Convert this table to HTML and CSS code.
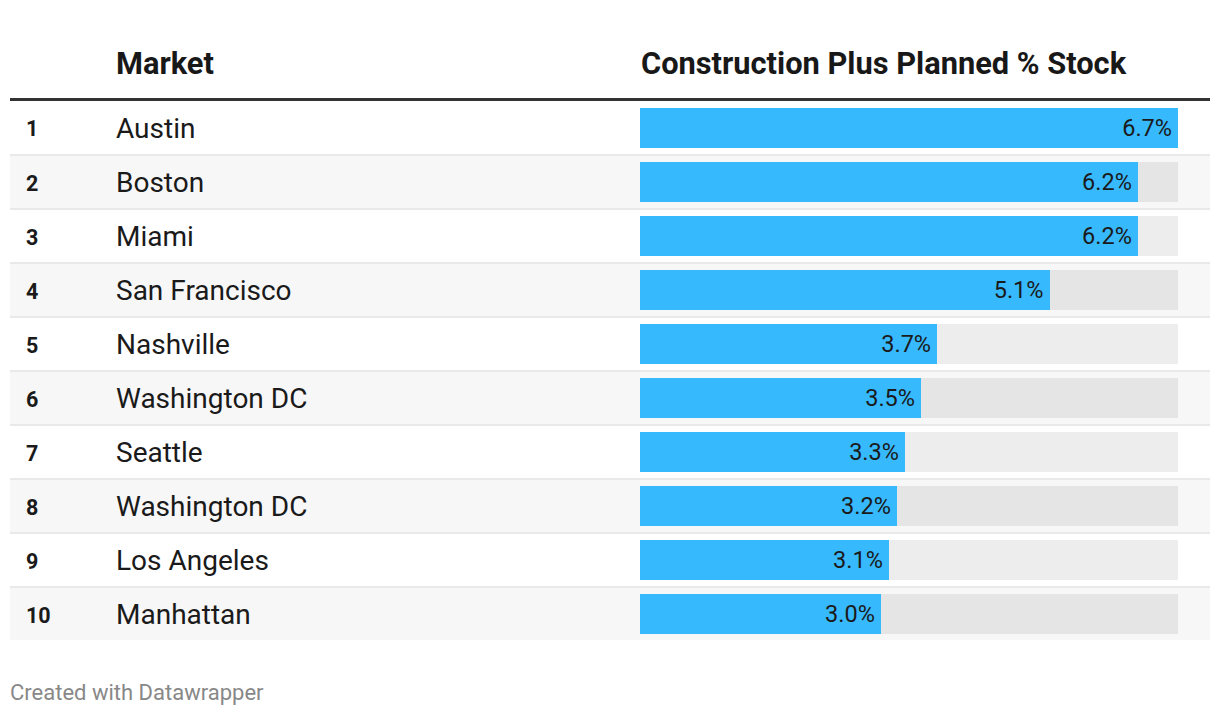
FILE: index.html
```html
<!DOCTYPE html>
<html>
<head>
<meta charset="utf-8">
<link rel="stylesheet" href="styles.css">
</head>
<body>
<div class="chart">
  <div class="table">
    <div class="head">
      <div class="c-rank"></div>
      <div class="c-market">Market</div>
      <div class="c-bar">Construction Plus Planned % Stock</div>
    </div>
    <div class="row first">
      <div class="c-rank">1</div><div class="c-market">Austin</div>
      <div class="c-bar"><div class="track"><div class="fill" style="width:100%"><span>6.7%</span></div></div></div>
    </div>
    <div class="row alt">
      <div class="c-rank">2</div><div class="c-market">Boston</div>
      <div class="c-bar"><div class="track"><div class="fill" style="width:92.54%"><span>6.2%</span></div></div></div>
    </div>
    <div class="row">
      <div class="c-rank">3</div><div class="c-market">Miami</div>
      <div class="c-bar"><div class="track"><div class="fill" style="width:92.54%"><span>6.2%</span></div></div></div>
    </div>
    <div class="row alt">
      <div class="c-rank">4</div><div class="c-market">San Francisco</div>
      <div class="c-bar"><div class="track"><div class="fill" style="width:76.12%"><span>5.1%</span></div></div></div>
    </div>
    <div class="row">
      <div class="c-rank">5</div><div class="c-market">Nashville</div>
      <div class="c-bar"><div class="track"><div class="fill" style="width:55.22%"><span>3.7%</span></div></div></div>
    </div>
    <div class="row alt">
      <div class="c-rank">6</div><div class="c-market">Washington DC</div>
      <div class="c-bar"><div class="track"><div class="fill" style="width:52.24%"><span>3.5%</span></div></div></div>
    </div>
    <div class="row">
      <div class="c-rank">7</div><div class="c-market">Seattle</div>
      <div class="c-bar"><div class="track"><div class="fill" style="width:49.25%"><span>3.3%</span></div></div></div>
    </div>
    <div class="row alt">
      <div class="c-rank">8</div><div class="c-market">Washington DC</div>
      <div class="c-bar"><div class="track"><div class="fill" style="width:47.76%"><span>3.2%</span></div></div></div>
    </div>
    <div class="row">
      <div class="c-rank">9</div><div class="c-market">Los Angeles</div>
      <div class="c-bar"><div class="track"><div class="fill" style="width:46.27%"><span>3.1%</span></div></div></div>
    </div>
    <div class="row alt last">
      <div class="c-rank">10</div><div class="c-market">Manhattan</div>
      <div class="c-bar"><div class="track"><div class="fill" style="width:44.78%"><span>3.0%</span></div></div></div>
    </div>
  </div>
  <div class="footer">Created with Datawrapper</div>
</div>
</body>
</html>
```

FILE: styles.css
```css
html, body {
  margin: 0;
  padding: 0;
  background: #ffffff;
}
body {
  font-family: Roboto, "Liberation Sans", sans-serif;
  color: #1a1a1a;
}
.chart {
  padding: 0 10px;
}
.table {
  display: flex;
  flex-direction: column;
}
.head, .row {
  display: flex;
  align-items: center;
}
.c-rank {
  width: 106px;
  flex: none;
  box-sizing: border-box;
  padding-left: 16px;
  padding-top: 2px;
  font-weight: 700;
  font-size: 21.5px;
}
.c-market {
  width: 524px;
  flex: none;
  font-size: 28px;
  padding-top: 1px;
}
.c-bar {
  flex: 1;
  padding-right: 32px;
}
.head {
  height: 98px;
  border-bottom: 3px solid #333333;
  align-items: flex-start;
}
.head .c-market, .head .c-bar {
  font-weight: 700;
  font-size: 30.8px;
  color: #181818;
  padding-top: 46px;
  line-height: 36px;
}
.head .c-bar {
  padding-left: 1px;
}
.row {
  height: 52px;
  border-bottom: 2px solid #e9e9e9;
}
.row.first {
  height: 53px;
}
.row.last {
  border-bottom: none;
}
.row.alt {
  background: #f7f7f7;
}
.track {
  height: 40px;
  background: rgba(0, 0, 0, 0.07);
  display: flex;
}
.fill {
  height: 40px;
  background: #37b9fd;
  display: flex;
  align-items: center;
  justify-content: flex-end;
  box-sizing: border-box;
  padding-right: 6px;
}
.fill span {
  font-size: 23.5px;
  color: #1a1a1a;
  line-height: 1;
  padding-top: 2px;
}
.footer {
  margin-top: 39px;
  font-size: 22px;
  color: #888888;
  line-height: 28px;
}
```
